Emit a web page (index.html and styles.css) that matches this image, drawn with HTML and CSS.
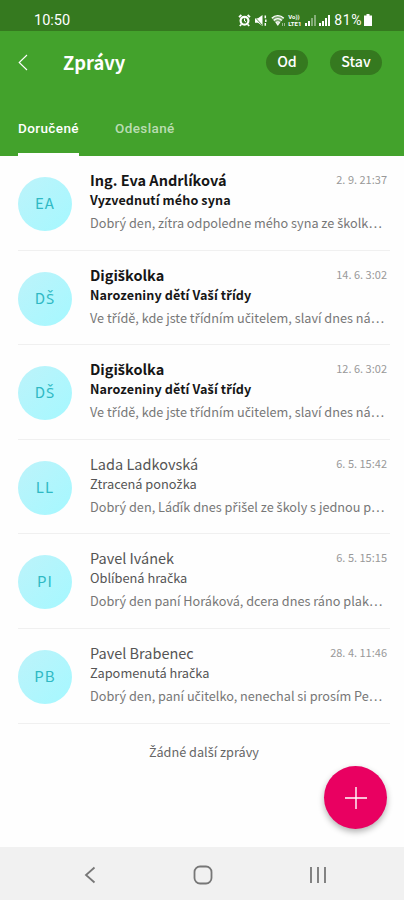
FILE: index.html
```html
<!DOCTYPE html>
<html lang="cs">
<head>
    <meta charset="UTF-8">
    <meta name="viewport" content="width=device-width, initial-scale=1.0">
    <title>Zprávy</title>
    <link rel="stylesheet" href="styles.css">
</head>
<body>
    <div class="status-bar">
        <span class="clock">10:50</span>
        <div class="status-icons">
            <!-- Alarm -->
            <svg width="13" height="13" viewBox="0 0 13 13">
                <circle cx="6.5" cy="6.8" r="5" fill="#fff"/>
                <path d="M1 3.2L3.4 1M12 3.2L9.6 1M3.2 10.5L1.8 12M9.8 10.5l1.4 1.5" stroke="#fff" stroke-width="1.8"/>
                <circle cx="6.5" cy="6.8" r="2.8" fill="#35791f"/>
                <path d="M6.5 4.5v2.5l1.5 1" fill="none" stroke="#fff" stroke-width="1"/>
            </svg>
            <!-- Muted -->
            <svg class="muted" width="14" height="13" viewBox="0 0 14 13">
                <path d="M1 4.3h3L8.5 1v11L4 8.7H1z" fill="#fff"/>
                <path d="M0 2.2l8 8.8" stroke="#35791f" stroke-width=".8"/>
                <path d="M11.3 1.5v2.8M11.8 5.5v2.5M11.3 9v2.8" stroke="#fff" stroke-width="1.5"/>
            </svg>
            <!-- Wifi -->
            <svg class="wifi" width="15" height="13" viewBox="0 0 15 13">
                <path d="M.8 4.2C4.2.5 9.4.5 12.8 4.2L6.8 11.5z" fill="#fff" opacity=".35"/>
                <path d="M.8 4.3C4.2.7 9.4.7 12.8 4.3M2.8 6.5c2.2-2.4 5.8-2.4 8 0M4.8 8.7c1.1-1.2 2.9-1.2 4 0" fill="none" stroke="#fff" stroke-width="1.3"/>
                <path d="M6.8 11.5L5.3 9.3h3zM11.5 9v3M13.5 9v3" fill="#fff" stroke="#fff" stroke-width=".5"/>
            </svg>
            <span class="volte"><span>Vo))</span><span>LTE1</span></span>
            <svg class="signal" width="12" height="12" viewBox="0 0 12 12">
                <path d="M1 9h2v3H1zM4 7h2v5H4z" fill="#fff"/>
                <path d="M7 4h2v8H7zM10 1h2v11h-2z" fill="#fff" opacity=".4"/>
            </svg>
            <svg class="signal" width="12" height="12" viewBox="0 0 12 12">
                <path d="M1 9h2v3H1zM4 7h2v5H4zM7 4h2v8H7zM10 1h2v11h-2z" fill="#fff"/>
            </svg>
            <span class="battery-text">81%</span>
            <svg width="8" height="12" viewBox="0 0 8 12">
                <path d="M2.5 0h3v1.5H8V12H0V1.5h2.5z" fill="#fff"/>
            </svg>
        </div>
    </div>

    <header>
        <div class="toolbar">
            <svg class="back" width="10" height="17" viewBox="0 0 10 17">
                <path d="M9 1L1.2 8.5L9 16" fill="none" stroke="#fff" stroke-width="1.1"/>
            </svg>
            <h1>Zprávy</h1>
            <button class="filter">Od</button>
            <button class="filter filter-state">Stav</button>
        </div>
        <nav class="tabs">
            <a class="tab active">Doručené</a>
            <a class="tab">Odeslané</a>
        </nav>
    </header>

    <main>
        <div class="message unread">
            <div class="avatar">EA</div>
            <div class="content">
                <div class="top"><span class="name">Ing. Eva Andrlíková</span><span class="date">2. 9. 21:37</span></div>
                <div class="subject">Vyzvednutí mého syna</div>
                <div class="preview">Dobrý den, zítra odpoledne mého syna ze školk…</div>
            </div>
        </div>
        <div class="message unread">
            <div class="avatar">DŠ</div>
            <div class="content">
                <div class="top"><span class="name">Digiškolka</span><span class="date">14. 6. 3:02</span></div>
                <div class="subject">Narozeniny dětí Vaší třídy</div>
                <div class="preview">Ve třídě, kde jste třídním učitelem, slaví dnes ná…</div>
            </div>
        </div>
        <div class="message unread">
            <div class="avatar">DŠ</div>
            <div class="content">
                <div class="top"><span class="name">Digiškolka</span><span class="date">12. 6. 3:02</span></div>
                <div class="subject">Narozeniny dětí Vaší třídy</div>
                <div class="preview">Ve třídě, kde jste třídním učitelem, slaví dnes ná…</div>
            </div>
        </div>
        <div class="message">
            <div class="avatar">LL</div>
            <div class="content">
                <div class="top"><span class="name">Lada Ladkovská</span><span class="date">6. 5. 15:42</span></div>
                <div class="subject">Ztracená ponožka</div>
                <div class="preview">Dobrý den, Láďík dnes přišel ze školy s jednou p…</div>
            </div>
        </div>
        <div class="message">
            <div class="avatar">PI</div>
            <div class="content">
                <div class="top"><span class="name">Pavel Ivánek</span><span class="date">6. 5. 15:15</span></div>
                <div class="subject">Oblíbená hračka</div>
                <div class="preview">Dobrý den paní Horáková, dcera dnes ráno plak…</div>
            </div>
        </div>
        <div class="message">
            <div class="avatar">PB</div>
            <div class="content">
                <div class="top"><span class="name">Pavel Brabenec</span><span class="date">28. 4. 11:46</span></div>
                <div class="subject">Zapomenutá hračka</div>
                <div class="preview">Dobrý den, paní učitelko, nenechal si prosím Pe…</div>
            </div>
        </div>
        <p class="no-more">Žádné další zprávy</p>
    </main>

    <!-- New message button -->
    <button class="fab">
        <svg width="24" height="24" viewBox="0 0 24 24">
            <path d="M12 1v22M1 12h22" stroke="#fff" stroke-width="1.4"/>
        </svg>
    </button>

    <footer class="nav-bar">
        <svg width="12" height="18" viewBox="0 0 12 18">
            <path d="M10.5 1.5L2 9l8.5 7.5" fill="none" stroke="#777" stroke-width="1.8"/>
        </svg>
        <svg width="20" height="20" viewBox="0 0 20 20">
            <rect x="1.5" y="1.5" width="17" height="17" rx="5.5" fill="none" stroke="#777" stroke-width="1.8"/>
        </svg>
        <svg width="18" height="18" viewBox="0 0 18 18">
            <path d="M2 1v16M9 1v16M16 1v16" stroke="#777" stroke-width="1.8"/>
        </svg>
    </footer>

    <script>
        const texts = document.querySelectorAll('.avatar, .name, .subject, .preview, .no-more');

        texts.forEach((el) => {
            el.innerHTML = el.textContent.replace(/[čďřšťžČĎŘŠŤŽ]/g, '<span class="caron">$&</span>');
        });
    </script>
</body>
</html>
```
FILE: styles.css
```css
* {
    box-sizing: border-box;
}

body {
    font-family: "Noto Sans CJK SC", "Noto Sans", sans-serif;
    margin: 0;
    height: 900px;
    display: flex;
    flex-direction: column;
    background-color: #fefefe;
    overflow: hidden;
    position: relative;
}

.caron {
    font-family: "Noto Sans", sans-serif;
    line-height: 1;
}

/* Phone status bar */
.status-bar {
    height: 31px;
    padding: 9px 32px 0 34px;
    display: flex;
    justify-content: space-between;
    align-items: center;
    background-color: #35791f;
    color: #fff;
    font-family: Roboto, sans-serif;
    font-size: 14.5px;
}

.status-icons {
    display: flex;
    align-items: center;
    gap: 2px;
}

.muted {
    margin-left: 1px;
}

.wifi {
    margin-left: 1px;
}

.volte {
    display: flex;
    flex-direction: column;
    width: 14px;
    font-size: 6px;
    line-height: 7px;
    font-weight: bold;
}

.battery-text {
    margin-left: 2px;
    font-size: 14px;
    letter-spacing: 0.6px;
}

/* Green header */
header {
    height: 125px;
    background-color: #43a22c;
    color: #fff;
    display: flex;
    flex-direction: column;
    justify-content: space-between;
}

.toolbar {
    height: 62px;
    padding: 0 22px 0 18px;
    display: flex;
    align-items: center;
}

h1 {
    flex: 1;
    margin: 0 0 0 35px;
    font-size: 18.3px;
    line-height: 28px;
    font-weight: bold;
}

.filter {
    width: 42px;
    height: 25px;
    padding: 0 0 2px;
    border: none;
    border-radius: 13px;
    background-color: #35791f;
    color: #fff;
    font-family: inherit;
    font-size: 14.2px;
    line-height: 23px;
    font-weight: 500;
}

.filter-state {
    width: 52px;
    margin-left: 22px;
}

.tabs {
    display: flex;
    gap: 36px;
    padding-left: 18px;
    font-family: Roboto, sans-serif;
    font-size: 13.5px;
    font-weight: 500;
    letter-spacing: 0.4px;
}

.tab {
    height: 36px;
    line-height: 17px;
    color: rgba(255, 255, 255, 0.65);
}

.tab.active {
    color: #fff;
    border-bottom: 3px solid #fff;
}

/* Message list */
main {
    flex: 1;
    padding: 0 14px 0 18px;
}

.message {
    height: 94.6px;
    display: flex;
    gap: 18px;
    border-bottom: 1px solid #f0f0f0;
    color: #555;
}

.avatar {
    width: 54px;
    height: 54px;
    flex-shrink: 0;
    margin-top: 21px;
    border-radius: 50%;
    background: linear-gradient(135deg, #bdf3fa, #a5f8ff);
    color: #2fb9c4;
    font-size: 15px;
    line-height: 52px;
    text-align: center;
    letter-spacing: 1px;
}

.content {
    flex: 1;
    min-width: 0;
    padding: 13px 3px 0 0;
}

.top {
    display: flex;
    justify-content: space-between;
    align-items: center;
    height: 21px;
    line-height: 21px;
}

.name {
    font-size: 14.5px;
}

.date {
    font-size: 11px;
    color: #999;
}

.subject {
    height: 19px;
    font-size: 12.8px;
    line-height: 19px;
}

.preview {
    margin-top: 4px;
    font-size: 12.7px;
    line-height: 20px;
    color: #777;
    white-space: nowrap;
}

.unread .name,
.unread .subject {
    color: #161616;
    font-weight: bold;
}

.unread .subject {
    font-size: 12.6px;
    letter-spacing: 0.1px;
}

.no-more {
    margin: 18px 0 0;
    font-size: 12.7px;
    line-height: 20px;
    text-align: center;
    color: #666;
}

/* Floating button */
.fab {
    position: absolute;
    right: 17px;
    bottom: 71px;
    width: 63px;
    height: 63px;
    padding: 0;
    border: none;
    border-radius: 50%;
    background-color: #e90061;
    box-shadow: 0 3px 6px rgba(0, 0, 0, 0.3);
    display: flex;
    justify-content: center;
    align-items: center;
}

/* Android navigation */
.nav-bar {
    height: 53px;
    padding: 2px 77px 0 84px;
    display: flex;
    justify-content: space-between;
    align-items: center;
    background-color: #f1f1f1;
}
```
